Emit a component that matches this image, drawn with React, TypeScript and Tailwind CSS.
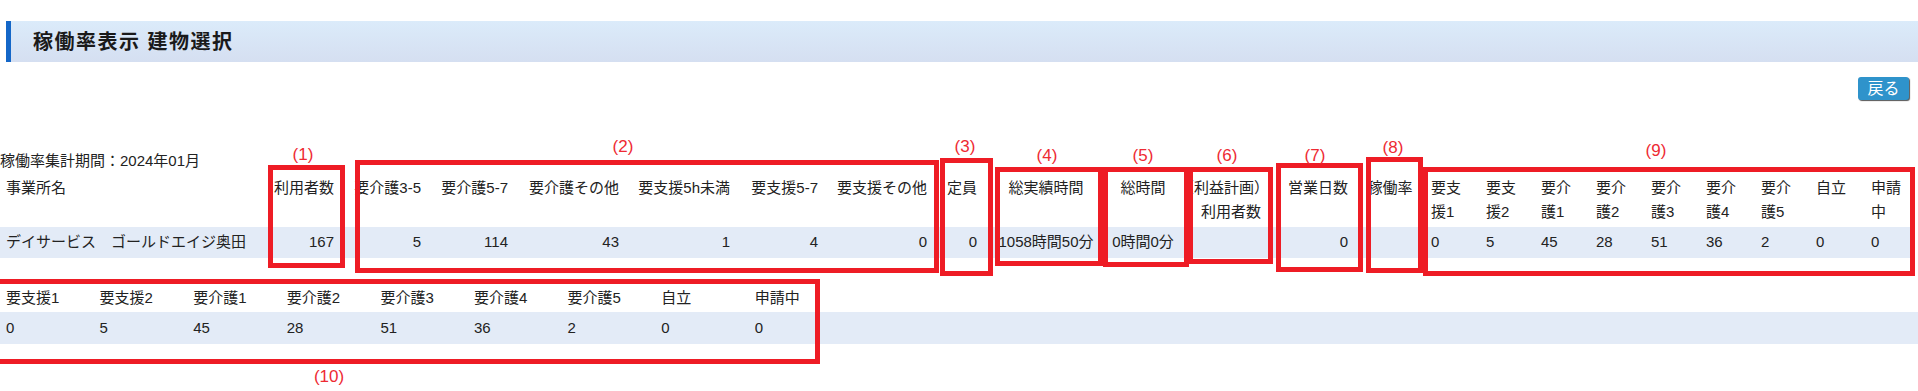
const headCls = "font-normal align-top leading-[24px] pt-0 pb-[3px] whitespace-nowrap";
const cellCls = "h-[31px] py-0 align-middle whitespace-nowrap";

const boxes = [
  { l: "left-[268px]", t: "top-[165px]", w: "w-[77px]", h: "h-[103px]" },
  { l: "left-[355px]", t: "top-[160px]", w: "w-[584px]", h: "h-[113px]" },
  { l: "left-[940px]", t: "top-[158px]", w: "w-[53px]", h: "h-[118px]" },
  { l: "left-[995px]", t: "top-[167px]", w: "w-[108px]", h: "h-[99px]" },
  { l: "left-[1103px]", t: "top-[167px]", w: "w-[86px]", h: "h-[100px]" },
  { l: "left-[1188px]", t: "top-[167px]", w: "w-[85px]", h: "h-[97px]" },
  { l: "left-[1276px]", t: "top-[163px]", w: "w-[87px]", h: "h-[109px]" },
  { l: "left-[1366px]", t: "top-[157px]", w: "w-[57px]", h: "h-[116px]" },
  { l: "left-[1423px]", t: "top-[167px]", w: "w-[492px]", h: "h-[109px]" },
  { l: "left-[-5px]", t: "top-[279px]", w: "w-[825px]", h: "h-[85px]" },
];

const labels = [
  { text: "(1)", l: "left-[303px]", t: "top-[143px]" },
  { text: "(2)", l: "left-[623px]", t: "top-[135px]" },
  { text: "(3)", l: "left-[965px]", t: "top-[135px]" },
  { text: "(4)", l: "left-[1047px]", t: "top-[144px]" },
  { text: "(5)", l: "left-[1143px]", t: "top-[144px]" },
  { text: "(6)", l: "left-[1227px]", t: "top-[144px]" },
  { text: "(7)", l: "left-[1315px]", t: "top-[144px]" },
  { text: "(8)", l: "left-[1393px]", t: "top-[136px]" },
  { text: "(9)", l: "left-[1656px]", t: "top-[139px]" },
  { text: "(10)", l: "left-[329px]", t: "top-[365px]" },
];

const care = [
  ["要支", "援1", "0"],
  ["要支", "援2", "5"],
  ["要介", "護1", "45"],
  ["要介", "護2", "28"],
  ["要介", "護3", "51"],
  ["要介", "護4", "36"],
  ["要介", "護5", "2"],
  ["自立", "", "0"],
  ["申請", "中", "0"],
];

const App = () => {
  return (
    <div className="relative w-full h-[391px] overflow-hidden bg-white text-[15px] text-[#222] font-['Liberation_Sans','Noto_Sans_CJK_JP',sans-serif]">
      {/* title */}
      <div className="mt-[21px] ml-[6px] h-[41px] flex items-center border-l-[5px] border-[#1467c8] bg-linear-to-b from-[#dbebfa] to-[#d5dff1] pl-[22px]">
        <h1 className="text-[20px] font-bold tracking-[1.5px] text-[#1a1a1a]">稼働率表示 建物選択</h1>
      </div>

      <div className="mt-[15px] flex justify-end pr-[9px]">
        <button className="w-[51px] h-[23px] rounded-[3px] bg-[#2f93cb] text-white text-[16px] leading-none shadow-[1px_1px_1px_#555]">
          戻る
        </button>
      </div>

      <div className="mt-[49px] leading-[24px]">稼働率集計期間：2024年01月</div>

      <table className="mt-[3px] w-[1912px] table-fixed border-collapse">
        <colgroup>
          <col className="w-[262px]" />
          <col className="w-[80px]" />
          <col className="w-[87px]" />
          <col className="w-[87px]" />
          <col className="w-[111px]" />
          <col className="w-[111px]" />
          <col className="w-[88px]" />
          <col className="w-[109px]" />
          <col className="w-[50px]" />
          <col className="w-[122px]" />
          <col className="w-[72px]" />
          <col className="w-[104px]" />
          <col className="w-[73px]" />
          <col className="w-[68px]" />
          <col className="w-[55px]" />
          <col className="w-[55px]" />
          <col className="w-[55px]" />
          <col className="w-[55px]" />
          <col className="w-[55px]" />
          <col className="w-[55px]" />
          <col className="w-[55px]" />
          <col className="w-[55px]" />
          <col className="w-[48px]" />
        </colgroup>
        <thead>
          <tr>
            <th className={`${headCls} text-left pl-[6px]`}>事業所名</th>
            <th className={`${headCls} text-right pr-[8px]`}>利用者数</th>
            <th className={`${headCls} text-right pr-[8px]`}>要介護3-5</th>
            <th className={`${headCls} text-right pr-[8px]`}>要介護5-7</th>
            <th className={`${headCls} text-right pr-[8px]`}>要介護その他</th>
            <th className={`${headCls} text-right pr-[8px]`}>要支援5h未満</th>
            <th className={`${headCls} text-right pr-[8px]`}>要支援5-7</th>
            <th className={`${headCls} text-right pr-[8px]`}>要支援その他</th>
            <th className={`${headCls} text-right pr-[8px]`}>定員</th>
            <th className={`${headCls} text-center`}>総実績時間</th>
            <th className={`${headCls} text-center`}>総時間</th>
            <th className={`${headCls} text-left px-0`}>
              （利益計画）
              <br />
              <span className="pl-[22px]">利用者数</span>
            </th>
            <th className={`${headCls} text-right pr-[8px]`}>営業日数</th>
            <th className={`${headCls} text-center`}>稼働率</th>
            {care.map((c, i) => (
              <th key={i} className={`${headCls} text-left pl-[7px]`}>
                {c[0]}
                {c[1] && <br />}
                {c[1]}
              </th>
            ))}
          </tr>
        </thead>
        <tbody>
          <tr className="bg-[#e3ebf7]">
            <td className={`${cellCls} pl-[6px]`}>デイサービス　ゴールドエイジ奥田</td>
            <td className={`${cellCls} text-right pr-[8px]`}>167</td>
            <td className={`${cellCls} text-right pr-[8px]`}>5</td>
            <td className={`${cellCls} text-right pr-[8px]`}>114</td>
            <td className={`${cellCls} text-right pr-[8px]`}>43</td>
            <td className={`${cellCls} text-right pr-[8px]`}>1</td>
            <td className={`${cellCls} text-right pr-[8px]`}>4</td>
            <td className={`${cellCls} text-right pr-[8px]`}>0</td>
            <td className={`${cellCls} text-right pr-[8px]`}>0</td>
            <td className={`${cellCls} text-center`}>1058時間50分</td>
            <td className={`${cellCls} text-center`}>0時間0分</td>
            <td className={cellCls}></td>
            <td className={`${cellCls} text-right pr-[8px]`}>0</td>
            <td className={cellCls}></td>
            {care.map((c, i) => (
              <td key={i} className={`${cellCls} text-left pl-[7px]`}>
                {c[2]}
              </td>
            ))}
          </tr>
        </tbody>
      </table>

      <table className="mt-[27px] w-full table-fixed border-collapse">
        <colgroup>
          {care.map((_, i) => (
            <col key={i} className="w-[93.6px]" />
          ))}
          <col />
        </colgroup>
        <thead>
          <tr>
            {care.map((c, i) => (
              <th key={i} className="font-normal text-left pl-[6px] pt-px pb-[2px] leading-[24px] whitespace-nowrap">
                {c[0] + c[1]}
              </th>
            ))}
            <th></th>
          </tr>
        </thead>
        <tbody>
          <tr className="bg-[#e3ebf7]">
            {care.map((c, i) => (
              <td key={i} className="h-[32px] py-0 pl-[6px] align-middle">
                {c[2]}
              </td>
            ))}
            <td></td>
          </tr>
        </tbody>
      </table>

      {/* annotations */}
      {boxes.map((b, i) => (
        <div key={i} className={`absolute ${b.l} ${b.t} ${b.w} ${b.h} border-[5px] border-[#ee1c25]`} />
      ))}
      {labels.map((lb, i) => (
        <div
          key={i}
          className={`absolute ${lb.l} ${lb.t} -translate-x-1/2 text-[17px] leading-[24px] text-[#ee2a33]`}
        >
          {lb.text}
        </div>
      ))}
    </div>
  );
};

export default App;
